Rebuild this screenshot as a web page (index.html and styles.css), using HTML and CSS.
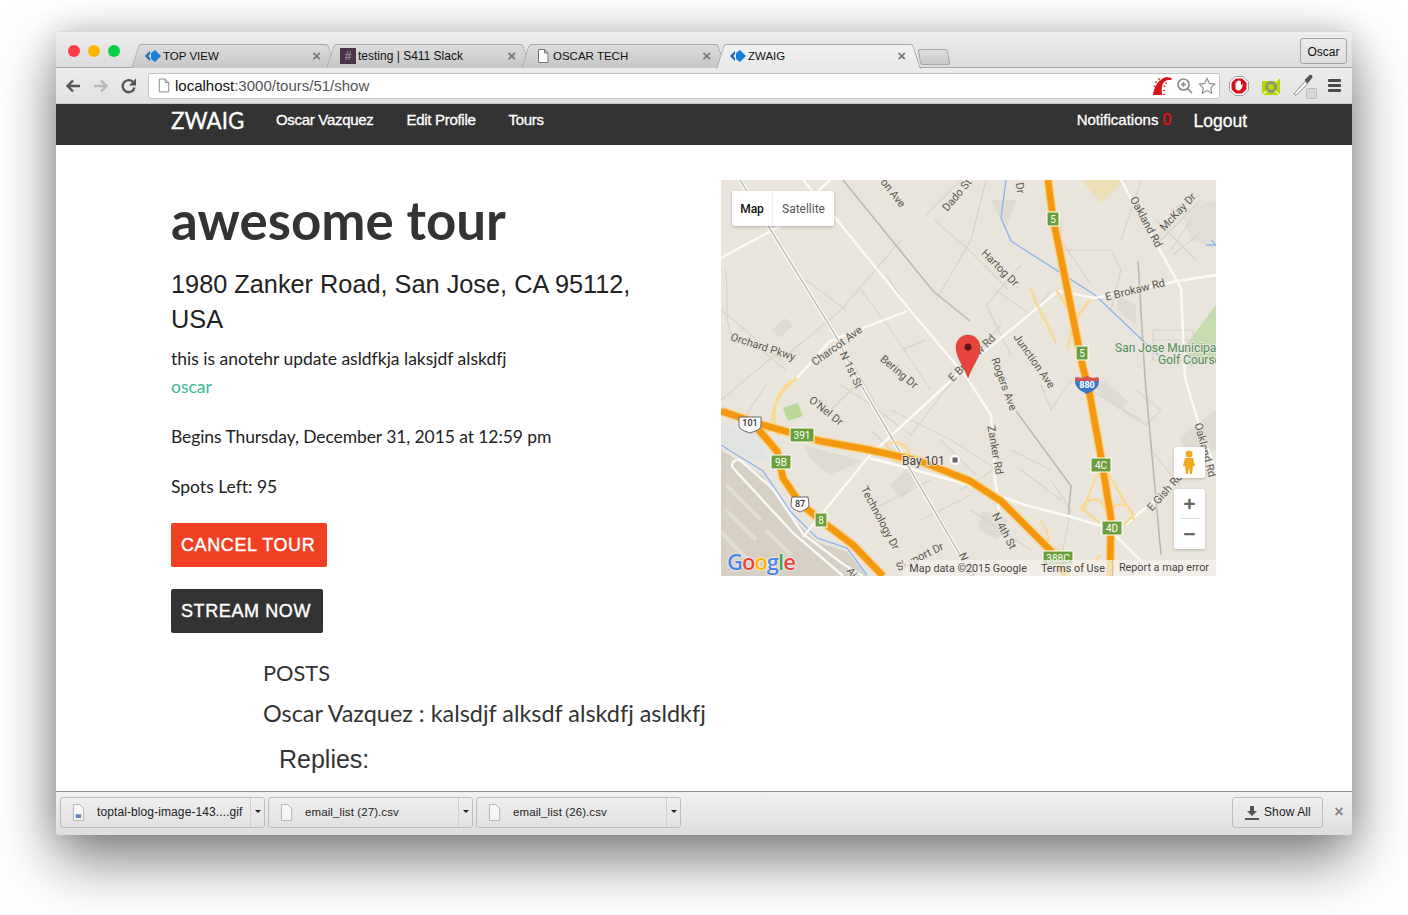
FILE: index.html
```html
<!DOCTYPE html>
<html lang="en">
<head>
    <title>ZWAIG</title>
    <meta charset="UTF-8">
    <link rel="stylesheet" href="styles.css">
</head>
<body>
<div class="window">
    <div class="titlebar">
        <div class="lights"><span class="light red"></span><span class="light yellow"></span><span class="light green"></span></div>
        <div class="tabs">
            <div class="tab">
                <svg class="favicon" viewBox="0 0 16 16"><path class="fav-dark" d="M0 8 5 3v3L3 8l2 2v3z"/><path class="fav-blue" d="M10 2l6 6-6 6-4-3V5z"/></svg>
                <span class="tab-title caps">TOP VIEW</span><span class="tab-close">×</span>
            </div>
            <div class="tab">
                <span class="slack-icon">#</span>
                <span class="tab-title">testing | S411 Slack</span><span class="tab-close">×</span>
            </div>
            <div class="tab">
                <svg class="favicon" viewBox="0 0 16 16"><path class="page-line" d="M3.5 1.5h6l3.500 3.500v9.500h-9.500zM9.500 1.500v3.500h3.500"/></svg>
                <span class="tab-title caps">OSCAR TECH</span><span class="tab-close">×</span>
            </div>
            <div class="tab active">
                <svg class="favicon" viewBox="0 0 16 16"><path class="fav-dark" d="M0 8 5 3v3L3 8l2 2v3z"/><path class="fav-blue" d="M10 2l6 6-6 6-4-3V5z"/></svg>
                <span class="tab-title caps">ZWAIG</span><span class="tab-close">×</span>
            </div>
            <div class="new-tab"></div>
        </div>
        <div class="user-btn">Oscar</div>
    </div>

    <div class="toolbar">
        <svg class="nav-icon" viewBox="0 0 18 18"><path class="arrow dark" d="M16 9H4M9 3.500 3.500 9 9 14.500"/></svg>
        <svg class="nav-icon" viewBox="0 0 18 18"><path class="arrow light" d="M2 9h12M9 3.500 14.500 9 9 14.500"/></svg>
        <svg class="nav-icon" viewBox="0 0 18 18"><path class="arrow dark" d="M14.500 10.500a6 6 0 1 1-1.500-5.500"/><path class="arrow-head" d="M16 1.500v7h-7z"/></svg>
        <div class="omnibox">
            <svg class="page-icon" viewBox="0 0 14 16"><path class="page-line" d="M1.500.500h7l4 4v11h-11zM8.500.500v4h4"/></svg>
            <span class="url"><b>localhost</b>:3000/tours/51/show</span>
            <svg class="omni-icon rails" viewBox="0 0 20 20"><path d="M0 20C1 11 6 3 14 1l6 1-1 2.500C14 3.500 10.500 6 9.500 11c-.6 3-.3 6 .5 9z"/><path d="M7 4 5.500 2.500M4 7 2 6M2.500 11 .5 10.500M13 7l1.500 1M11 10.500l2 .5M10.500 15l2 .5M11 19l2 .5" class="rails-spark"/></svg>
            <svg class="omni-icon" viewBox="0 0 18 18"><circle class="lens" cx="7.500" cy="7.500" r="5.500"/><path class="lens" d="M11.500 11.500 16 16M5 7.500h5M7.500 5v5"/></svg>
            <svg class="omni-icon star" viewBox="0 0 20 20"><path d="M10 1.500l2.600 5.600 6 .8-4.400 4.200 1.100 6L10 15.100l-5.300 3 1.100-6L1.400 7.900l6-.8z"/></svg>
        </div>
        <svg class="ext stop" viewBox="0 0 20 20"><path class="stop-outer" d="M6 .5h8L19.500 6v8L14 19.500H6L.5 14V6z"/><path class="stop-inner" d="M6.800 2.500h6.400l4.300 4.300v6.400l-4.300 4.300H6.800l-4.300-4.300V6.800z"/><path class="stop-hand" d="M6.500 11V6.500h1.300V9V5h1.400v4V4.500h1.400V9V5h1.400v4.500l1.200-1.300.9.700-1.900 4.100c-.5.900-1.100 1.500-2.300 1.500H9.500c-1.700 0-3-1-3-3z"/></svg>
        <svg class="ext lime-ext" viewBox="0 0 20 20"><path class="lime" d="M1 5h13l4-3 1 1v16H1z"/><circle class="lime-ring" cx="10" cy="11" r="4.500"/><path class="lime-slash" d="M14 6l5-5M1 19l5-4M14 15l5 4"/></svg>
        <svg class="dropper" viewBox="0 0 24 26"><path class="drop-stem" d="M1 21 12 8.500l2.500 2.500L3 22.500z"/><path class="drop-bulb" d="M11.500 7l5-5c1.500-1 4 1 2.500 3l-4.500 5.500z"/><rect class="drop-badge" x="13.500" y="15.500" width="10" height="10" rx="1"/></svg>
        <div class="menu-icon"><span></span><span></span><span></span></div>
    </div>

    <div class="viewport">
        <nav class="navbar">
            <a class="brand" href="#">ZWAIG</a>
            <a class="nav-link" href="#">Oscar Vazquez</a>
            <a class="nav-link" href="#">Edit Profile</a>
            <a class="nav-link" href="#">Tours</a>
            <a class="nav-link notif" href="#">Notifications <span class="count">0</span></a>
            <a class="logout" href="#">Logout</a>
        </nav>

        <div class="tour">
            <div class="tour-info">
                <h1>awesome tour</h1>
                <h3 class="address">1980 Zanker Road, San Jose, CA 95112, USA</h3>
                <p class="desc">this is anotehr update asldfkja laksjdf alskdfj</p>
                <a class="host" href="#">oscar</a>
                <p class="begins">Begins Thursday, December 31, 2015 at 12:59 pm</p>
                <p class="spots">Spots Left: 95</p>
                <a class="btn btn-cancel" href="#">CANCEL TOUR</a>
                <a class="btn btn-stream" href="#">STREAM NOW</a>
                <div class="posts">
                    <div class="posts-title">POSTS</div>
                    <div class="post">Oscar Vazquez : kalsdjf alksdf alskdfj asldkfj</div>
                    <div class="replies">Replies:</div>
                </div>
            </div>

            <div class="map">
                <svg class="map-canvas" viewBox="0 0 495 396">
                    <!-- land blocks -->
                    <path class="airport" d="M0 270 42 296 69 336 96 362 126 372 146 396H0z"/>
                    <path class="strip" d="M5 305 40 340M5 330 35 360M0 352 25 378M45 350l25 25"/>
                    <path class="runway" d="M0 243 38 252 48 282 30 280 0 262z"/>
                    <path class="sand" d="M360 0h45l-25 23z"/>
                    <path class="golf" d="M495 125 465 165 470 186 495 180z"/>
                    <path class="park" d="M62 228 77 223 82 236 67 241z"/>
                    <path class="block" d="M82 265 142 281 109 295 90 280zM270 20l25 0-10 30zM395 115l20 10 0 20-18-15zM383 200l25 22-10 8-25-22zM458 258l37-28v40l-25 10zM169 305 190 285 198 300 180 320zM262 330l25 10 -10 20-20-10zM50 150l14-12 8 8-14 12z"/>
                    <path class="block-light" d="M460 30l35-10v50l-25-10z"/>

                    <!-- minor streets -->
                    <path class="minor" d="M0 130 60 180 120 130 180 60M140 110l30 40 40 60M165 95l20 30M213 40l35 30 40 40M265 0l-15 60-35 60M300 85l-35 40 25 50M205 35l50-50M340 60l30 45M340 40v30l20 0 30 0 10 20-10 40M400 60l20-60M435 40l40 40M450 30l30-15M440 60l40-40M470 40l-20 30M452 75l25-20M432 150h40v30h-40zM432 160h40M432 170h40M40 170l25 20M0 220l60-50M25 235l20-30M120 205l30 20 40 30 30-40 60-70M150 250l40 40M170 230l60 30 55 35M220 260l35 35M300 290l40 30M240 310l40-25M290 270l40 20M370 210l50 30M400 230l25 15 15-15-25-20M430 270l40 50M200 340l50-25M330 300l20 30-10 50M250 330l60 40"/>
                    <path class="minor" d="M20 280l-15 60M110 230l30-30M130 180l25 45M180 170l25-10M330 110l-20 25-35-25M350 200l-20 30-10-25M4 90c6 30-4 50 10 70M85 100l40 30M150 330l60-30"/>

                    <!-- water -->
                    <path class="water" d="M285 0l-5 38 10 23 84 54 63 60M0 265 42 291 69 331 96 358 126 368 146 395M490 60l5 5M485 65l10 0"/>

                    <!-- rail -->
                    <path class="rail" d="M122 0 212 111 249 141M295 231 350 306 347 338M417 81 424 198 440 375"/>

                    <!-- streets -->
                    <path class="white" d="M0 78 59 46 109 0"/>
                    <path class="white" d="M82 0 112 35 189 130 246 198 270 235 274 298 278 330"/>
                    <path class="white" d="M76 198 109 161 186 131"/>
                    <path class="white" d="M82 357 149 275 247 185 337 111 374 118 457 101 495 95"/>
                    <path class="white" d="M400 0 460 108 464 198 480 251 495 290"/>
                    <path class="white" d="M149 278 249 305 304 325 347 336 387 348 434 395"/>
                    <path class="white" d="M404 345 460 298"/>
                    <path class="white" d="M12 288c-3-6 3-10 8-7l32 28 30 45 40 30 20 12"/>
                    <path class="white" d="M12 288 72 353 122 396"/>
                    <path class="light-rail" d="M19 0 116 158 136 198 239 375 250 396"/>
                    <path class="light-rail-core" d="M19 0 116 158 136 198 239 375 250 396"/>

                    <!-- ramps -->
                    <path class="ramp" d="M76 198C60 210 50 225 50 250M70 200C55 215 48 228 58 256M335 110c8 10 10 20 20 30 5-10 10-15 14-20M355 140c-5 10-7 20-8 30M310 108c5 20 15 30 25 55M380 285c-5 15-12 25-17 45l15 12M385 290c10 15 15 30 28 45l-10 10M360 330c5-15 25-15 25 5M388 335c5-15 22-15 25 5M165 265c10-8 30 3 20 15-8 5-18 0-20-15M340 371c-30-10 0 0-20-30M330 375c20 10 30 20 50 0"/>

                    <!-- freeways -->
                    <path class="hw-edge" d="M327 0 332 38 362 188 367 205 379 271 390 338 389 396"/>
                    <path class="hw-edge" d="M0 231 42 245 99 261 149 270 199 281 249 301 280 321 330 371 345 396"/>
                    <path class="hw-edge" d="M36 248 56 271 62 298 79 323 99 340 132 365 162 396"/>
                    <path class="hw" d="M327 0 332 38 362 188 367 205 379 271 390 338 389 396"/>
                    <path class="hw" d="M0 231 42 245 99 261 149 270 199 281 249 301 280 321 330 371 345 396"/>
                    <path class="hw" d="M36 248 56 271 62 298 79 323 99 340 132 365 162 396"/>

                    <!-- route markers -->
                    <g class="exit" transform="translate(332 39)"><rect x="-6" y="-7" width="12" height="14"/><text y="4">5</text></g>
                    <g class="exit" transform="translate(361 173)"><rect x="-6" y="-7" width="12" height="14"/><text y="4">5</text></g>
                    <g class="exit" transform="translate(380 285)"><rect x="-10" y="-7" width="20" height="14"/><text y="4">4C</text></g>
                    <g class="exit" transform="translate(391 348)"><rect x="-10" y="-7" width="20" height="14"/><text y="4">4D</text></g>
                    <g class="exit" transform="translate(337 378)"><rect x="-15" y="-7" width="30" height="14"/><text y="4">388C</text></g>
                    <g class="exit" transform="translate(81 255)"><rect x="-12" y="-7" width="24" height="14"/><text y="4">391</text></g>
                    <g class="exit" transform="translate(60 282)"><rect x="-10" y="-7" width="20" height="14"/><text y="4">9B</text></g>
                    <g class="exit" transform="translate(100 340)"><rect x="-6" y="-7" width="12" height="14"/><text y="4">8</text></g>
                    <g class="shield" transform="translate(29 243)"><path d="M-11-6h22v8c0 5-6 6-11 8-5-2-11-3-11-8z"/><text y="3">101</text></g>
                    <g class="shield" transform="translate(79 324)"><path d="M-8-7H8l1 7c0 5-5 6-9 8-4-2-9-3-9-8z"/><text y="3">87</text></g>
                    <g class="interstate" transform="translate(366 204)">
                        <path class="i-blue" d="M-12-3h24c0 7-6 10-12 13-6-3-12-6-12-13z"/>
                        <path class="i-red" d="M-12-3c0-2 0-3 1-4 4 1 8 1 11-1 3 2 7 2 11 1 1 1 1 2 1 4z"/>
                        <text y="4">880</text>
                    </g>

                    <!-- labels -->
                    <text class="lbl" transform="translate(236 15) rotate(-50)">Dado St</text>
                    <text class="lbl" transform="translate(172 13) rotate(52)">on Ave</text>
                    <text class="lbl" transform="translate(299 8) rotate(82)">Dr</text>
                    <text class="lbl" transform="translate(279 88) rotate(45)">Hartog Dr</text>
                    <text class="lbl" transform="translate(425 42) rotate(62)">Oakland Rd</text>
                    <text class="lbl" transform="translate(457 32) rotate(-47)">McKay Dr</text>
                    <text class="lbl" transform="translate(414 110) rotate(-14)">E Brokaw Rd</text>
                    <text class="lbl" transform="translate(42 167) rotate(18)">Orchard Pkwy</text>
                    <text class="lbl" transform="translate(116 166) rotate(-36)">Charcot Ave</text>
                    <text class="lbl" transform="translate(130 190) rotate(65)">N 1st St</text>
                    <text class="lbl" transform="translate(178 192) rotate(40)">Bering Dr</text>
                    <text class="lbl" transform="translate(251 178) rotate(-45)">E Brokaw Rd</text>
                    <text class="lbl" transform="translate(283 204) rotate(70)">Rogers Ave</text>
                    <text class="lbl" transform="translate(313 181) rotate(55)">Junction Ave</text>
                    <text class="lbl" transform="translate(105 231) rotate(38)">O'Nel Dr</text>
                    <text class="lbl" transform="translate(274 270) rotate(80)">Zanker Rd</text>
                    <text class="lbl" transform="translate(159 338) rotate(62)">Technology Dr</text>
                    <text class="lbl" transform="translate(283 351) rotate(62)">N 4th St</text>
                    <text class="lbl" transform="translate(444 312) rotate(-48)">E Gish Rd</text>
                    <text class="lbl" transform="translate(484 270) rotate(75)">Oakland Rd</text>
                    <text class="lbl" transform="translate(199 377) rotate(-26)">Skyport Dr</text>
                    <text class="lbl" transform="translate(249 391) rotate(65)">N 1st St</text>
                    <text class="lbl" transform="translate(138 402) rotate(52)">Airport</text>
                    <text class="lbl golf-lbl" x="394" y="172">San Jose Municipal</text>
                    <text class="lbl golf-lbl" x="437" y="184">Golf Course</text>
                    <text class="lbl poi" x="181" y="285">Bay 101</text>
                    <g transform="translate(234 280)"><circle class="poi-bg" r="5"/><path class="poi-mark" d="M-2.500-2.500h5v5h-5z"/></g>

                    <!-- marker -->
                    <path class="pin" d="M247 198C243 186 235 178 235 167a12 12 0 0 1 24 0C259 178 251 186 247 198z"/>
                    <circle class="pin-dot" cx="247" cy="167" r="3.500"/>
                </svg>

                <div class="map-type"><span class="type-on">Map</span><span class="type-off">Satellite</span></div>
                <div class="pegman">
                    <svg viewBox="0 0 14 24"><circle class="peg" cx="7" cy="4" r="3.500"/><path class="peg" d="M3 8h8l2 8h-2l-1 8H8l-1-7-1 7H4l-1-8H1z"/></svg>
                </div>
                <div class="zoom-ctl">
                    <span class="zoom-btn">+</span>
                    <span class="zoom-sep"></span>
                    <span class="zoom-btn">−</span>
                </div>
                <div class="google"><i class="g-b">G</i><i class="g-r">o</i><i class="g-y">o</i><i class="g-b">g</i><i class="g-g">l</i><i class="g-r">e</i></div>
                <div class="map-foot">
                    <span class="foot-item foot-data">Map data ©2015 Google</span>
                    <span class="foot-item foot-terms">Terms of Use</span>
                    <span class="foot-item foot-report">Report a map error</span>
                </div>
            </div>
        </div>
    </div>

    <div class="downloads">
        <div class="dl-item">
            <svg class="dl-icon" viewBox="0 0 14 18"><path class="dl-page" d="M1.500.500h7l4 4v13h-11z"/><path class="dl-pic" d="M4 11h6v4H4z"/></svg>
            <span class="dl-name long">toptal-blog-image-143....gif</span>
            <span class="dl-caret"></span>
        </div>
        <div class="dl-item">
            <svg class="dl-icon" viewBox="0 0 14 18"><path class="dl-page" d="M1.500.500h7l4 4v13h-11z"/></svg>
            <span class="dl-name">email_list (27).csv</span>
            <span class="dl-caret"></span>
        </div>
        <div class="dl-item">
            <svg class="dl-icon" viewBox="0 0 14 18"><path class="dl-page" d="M1.500.500h7l4 4v13h-11z"/></svg>
            <span class="dl-name">email_list (26).csv</span>
            <span class="dl-caret"></span>
        </div>
        <div class="show-all">
            <svg class="dl-arrow" viewBox="0 0 14 14"><path d="M5 0h4v5h3L7 10 2 5h3zM0 12h14v2H0z"/></svg>
            <span class="show-text">Show All</span>
        </div>
        <span class="dl-close">×</span>
    </div>
</div>
</body>
</html>
```

FILE: styles.css
```css
* {
    box-sizing: border-box;
}
html, body {
    margin: 0;
    height: 100%;
    overflow: hidden;
    background-color: #fff;
}
body {
    padding: 31px 56px 0;
    font-family: "Liberation Sans", Arial, sans-serif;
    color: #333;
}
a {
    text-decoration: none;
}
.window {
    width: 1296px;
    height: 804px;
    display: flex;
    flex-direction: column;
    border-radius: 5px 5px 4px 4px;
    background-color: #fff;
    box-shadow: 0 25px 60px rgba(0, 0, 0, 0.5), 0 0 30px rgba(0, 0, 0, 0.15);
    overflow: hidden;
}

/* title bar */
.titlebar {
    height: 37px;
    display: flex;
    background: linear-gradient(#eeeeee, #dcdcdc);
    border-top: 1px solid #d8d8d8;
    border-bottom: 1px solid #a8a8a8;
    position: relative;
}
.lights {
    display: flex;
    gap: 8px;
    padding: 13px 0 0 12px;
    width: 75px;
}
.light {
    width: 12px;
    height: 12px;
    border-radius: 50%;
}
.light.red { background-color: #fc3b44; }
.light.yellow { background-color: #fdb802; }
.light.green { background-color: #09ce48; }
.tabs {
    display: flex;
    padding-top: 12px;
    height: 36px;
}
.tab {
    position: relative;
    width: 205px;
    height: 24px;
    margin-right: -10px;
    padding: 0 14px;
    display: flex;
    align-items: center;
    gap: 2px;
    font-size: 12px;
    color: #111;
}
.tab::before, .tab::after {
    content: "";
    position: absolute;
    top: 0;
    bottom: 0;
    width: 60%;
    z-index: 0;
    border-top: 1px solid #a6a6a6;
    background: linear-gradient(#dcdcdc, #c6c6c6);
}
.tab::before {
    left: 4px;
    transform: skewX(-18deg);
    border-left: 1px solid #a6a6a6;
    border-radius: 3px 0 0 0;
}
.tab::after {
    right: 4px;
    transform: skewX(18deg);
    border-right: 1px solid #a6a6a6;
    border-radius: 0 3px 0 0;
}
.tab.active {
    z-index: 2;
    height: 25px;
    padding-bottom: 1px;
}
.tab.active::before, .tab.active::after {
    background: linear-gradient(#f2f2f2, #e8e8e8);
}
.tab > * {
    position: relative;
    z-index: 1;
}
.favicon {
    width: 16px;
    height: 16px;
    flex: none;
}
.fav-blue { fill: #1a7fd6; }
.fav-dark { fill: #1262ae; }
.page-line {
    fill: #fff;
    stroke: #777;
    stroke-width: 1;
}
.slack-icon {
    width: 16px;
    height: 16px;
    flex: none;
    background-color: #4d3347;
    color: #b9a8b4;
    font-size: 12px;
    line-height: 16px;
    text-align: center;
}
.tab-title {
    flex: 1;
}
.tab-title.caps {
    font-size: 11.500px;
}
.tab-close {
    color: #777;
    font-size: 15px;
    font-weight: bold;
    line-height: 16px;
    margin-right: 1px;
}
.new-tab {
    width: 30px;
    height: 16px;
    margin: 5px 0 0 8px;
    border: 1px solid #a6a6a6;
    border-radius: 3px;
    background: linear-gradient(#dedede, #cacaca);
    transform: skewX(10deg);
}
.user-btn {
    position: absolute;
    top: 6px;
    right: 5px;
    width: 47px;
    height: 26px;
    border: 1px solid #a5a5a5;
    border-radius: 3px;
    font-size: 12px;
    line-height: 27px;
    text-align: center;
    color: #111;
}

/* toolbar */
.toolbar {
    height: 36px;
    display: flex;
    align-items: center;
    padding: 0 9px 0 8px;
    background: linear-gradient(#ececec, #e2e2e2);
    border-bottom: 1px solid #c8c8c8;
    gap: 10px;
}
.nav-icon {
    width: 18px;
    height: 18px;
    flex: none;
}
.arrow {
    fill: none;
    stroke-width: 2.400;
}
.arrow.dark { stroke: #555; }
.arrow.light { stroke: #b8b8b8; }
.arrow-head { fill: #555; }
.omnibox {
    width: 1072px;
    height: 26px;
    display: flex;
    align-items: center;
    background-color: #fff;
    border: 1px solid #c4c4c4;
    border-radius: 3px;
    padding: 0 3px 0 9px;
    flex: none;
}
.page-icon {
    width: 12px;
    height: 15px;
    flex: none;
}
.url {
    flex: 1;
    margin-left: 5px;
    font-size: 15px;
    color: #555;
}
.url b {
    font-weight: normal;
    color: #111;
}
.omni-icon {
    width: 18px;
    height: 18px;
    margin-left: 4px;
    flex: none;
}
.rails {
    width: 19px;
    height: 19px;
    fill: #d5151c;
}
.rails-spark {
    stroke: #d5151c;
    stroke-width: 1.300;
    fill: none;
}
.lens {
    fill: none;
    stroke: #888;
    stroke-width: 1.600;
}
.star path {
    fill: #fff;
    stroke: #888;
    stroke-width: 1.200;
}
.ext {
    width: 20px;
    height: 20px;
    flex: none;
}
.stop {
    margin-left: -1px;
}
.lime-ext {
    margin-left: 2px;
}
.stop-outer { fill: #fff; stroke: #888; stroke-width: 0.800; }
.stop-inner { fill: #d9101a; }
.stop-hand { fill: #fff; }
.lime { fill: #b9d800; }
.lime-ring { fill: none; stroke: #8a9a70; stroke-width: 3; }
.lime-slash { fill: none; stroke: #eef3d0; stroke-width: 1.500; }
.dropper {
    width: 24px;
    height: 26px;
    flex: none;
    margin-left: 2px;
}
.drop-stem { fill: #fff; stroke: #888; }
.drop-bulb { fill: #555; }
.drop-badge { fill: #d8d6d0; stroke: #bbb; }
.menu-icon {
    width: 13px;
    margin-left: 1px;
    display: flex;
    flex-direction: column;
    gap: 2px;
}
.menu-icon span {
    height: 3px;
    border-radius: 1px;
    background-color: #4a4a4a;
}

/* page */
.viewport {
    flex: 1;
    min-height: 0;
    overflow: hidden;
    background-color: #fff;
    border-bottom: 1px solid #8e8e8e;
}
.navbar {
    height: 41px;
    padding-left: 115px;
    display: flex;
    align-items: center;
    background-color: #333;
    color: #fff;
}
.brand {
    font-family: Lato, sans-serif;
    font-size: 22.300px;
    color: #fff;
    -webkit-text-stroke: 0.300px #fff;
    width: 105px;
    margin-top: -9px;
}
.nav-link {
    font-size: 15px;
    color: #fff;
    -webkit-text-stroke: 0.300px #fff;
    margin-right: 33px;
    margin-top: -10px;
    letter-spacing: -0.300px;
}
.notif {
    margin-left: auto;
    margin-right: 22px;
    letter-spacing: 0;
}
.count {
    font-size: 16px;
    color: #f01010;
    -webkit-text-stroke: 0.300px #f01010;
}
.logout {
    font-size: 17.500px;
    color: #fff;
    -webkit-text-stroke: 0.300px #fff;
    margin-right: 105px;
    margin-top: -6px;
}
.tour {
    display: flex;
    padding: 35px 0 0 115px;
}
.tour-info {
    width: 550px;
    flex: none;
    font-family: Lato, sans-serif;
    font-size: 17.500px;
    font-variant-ligatures: none;
    color: #222;
}
h1 {
    margin: 9px 0 0;
    font-size: 52.800px;
    line-height: 62px;
    font-weight: 700;
    color: #333;
}
.address {
    margin: 16px 0 0;
    width: 470px;
    font-family: "Liberation Sans", Arial, sans-serif;
    font-size: 25.300px;
    line-height: 35px;
    font-weight: normal;
    color: #222;
}
.desc {
    margin: 8px 0 0;
    line-height: 28px;
}
.host {
    display: block;
    color: #3bb897;
    line-height: 28px;
}
.begins {
    margin: 22px 0 0;
    line-height: 28px;
    letter-spacing: -0.090px;
}
.spots {
    margin: 22px 0 0;
    line-height: 28px;
}
.btn {
    display: table;
    height: 44px;
    padding: 0 12px 0 10px;
    border-radius: 2px;
    font-family: "Liberation Sans", Arial, sans-serif;
    font-size: 18px;
    line-height: 44px;
    letter-spacing: 0.600px;
    color: #fff;
    -webkit-text-stroke: 0.400px #fff;
}
.btn-cancel {
    margin-top: 22px;
    background-color: #f24024;
}
.btn-stream {
    margin-top: 22px;
    background-color: #333;
}
.posts {
    margin: 24px 0 0 92px;
    color: #333;
}
.posts-title {
    font-size: 21.800px;
    line-height: 32px;
}
.post {
    margin-top: 8px;
    font-size: 23.400px;
    line-height: 32px;
    white-space: nowrap;
}
.replies {
    margin: 14px 0 0 16px;
    font-family: "Liberation Sans", Arial, sans-serif;
    font-size: 25px;
    line-height: 32px;
}

/* map */
.map {
    width: 495px;
    height: 396px;
    flex: none;
    position: relative;
    overflow: hidden;
    background-color: #e9e5dc;
}
.map-canvas {
    display: block;
    width: 495px;
    height: 396px;
}
.map-canvas path {
    fill: none;
}
.map-canvas .airport { fill: #d6cfc3; }
.map-canvas .runway { fill: #e1e3e2; }
.map-canvas .sand { fill: #ede0b6; }
.map-canvas .golf { fill: #c5dbb0; }
.map-canvas .park { fill: #b8d99a; }
.map-canvas .block { fill: #dfdbd2; }
.map-canvas .block-light { fill: #e2ded5; }
.strip { stroke: #e2ddd3; stroke-width: 4; }
.minor { stroke: #d8d4c7; stroke-width: 1.200; }
.water { stroke: #8db5ee; stroke-width: 1.400; }
.rail { stroke: #b9b9b3; stroke-width: 1.600; }
.white { stroke: #fbfaf7; stroke-width: 2.400; }
.light-rail { stroke: #fbfaf7; stroke-width: 4; }
.light-rail-core { stroke: #b9b9b3; stroke-width: 1.400; }
.ramp { stroke: #fbd88c; stroke-width: 2.200; }
.hw-edge { stroke: #fbcf7d; stroke-width: 9; }
.hw { stroke: #f4990f; stroke-width: 6.500; }
.exit rect {
    fill: #6b9f3b;
    stroke: #fff;
    stroke-width: 1;
}
.exit text {
    font-family: Roboto, sans-serif;
    font-size: 10px;
    fill: #fff;
    text-anchor: middle;
}
.map-canvas .shield path {
    fill: #fff;
    stroke: #666;
    stroke-width: 1;
}
.shield text {
    font-family: Roboto, sans-serif;
    font-size: 9px;
    font-weight: 500;
    fill: #333;
    text-anchor: middle;
}
.map-canvas .i-blue { fill: #3a77c4; }
.map-canvas .i-red { fill: #d9534f; }
.interstate text {
    font-family: Roboto, sans-serif;
    font-size: 9px;
    font-weight: 700;
    fill: #fff;
    text-anchor: middle;
}
.lbl {
    font-family: Roboto, sans-serif;
    font-size: 11px;
    fill: #5b5a50;
    stroke: #e9e5dc;
    stroke-width: 2px;
    paint-order: stroke;
    text-anchor: middle;
    dominant-baseline: central;
}
.golf-lbl {
    font-size: 12px;
    fill: #4d8f58;
    text-anchor: start;
    dominant-baseline: auto;
}
.poi {
    font-size: 12px;
    fill: #444;
    text-anchor: start;
    dominant-baseline: auto;
}
.poi-bg { fill: #fff; }
.map-canvas .poi-mark { fill: #6d5d5d; }
.map-canvas .pin {
    fill: #e8433d;
    stroke: #c33a33;
    stroke-width: 0.500;
}
.pin-dot { fill: #5f1210; }
.map-type {
    position: absolute;
    top: 11px;
    left: 11px;
    width: 102px;
    height: 35px;
    display: flex;
    background-color: #fff;
    border-radius: 2px;
    box-shadow: 0 1px 3px rgba(0, 0, 0, 0.25);
    font-family: Roboto, sans-serif;
    font-size: 12px;
    line-height: 36px;
    text-align: center;
}
.type-on {
    width: 41px;
    font-weight: 500;
    color: #111;
    border-right: 1px solid #eee;
}
.type-off {
    flex: 1;
    color: #565656;
}
.pegman {
    position: absolute;
    top: 267px;
    left: 453px;
    width: 31px;
    height: 31px;
    padding: 3px 8px;
    background-color: #fff;
    border-radius: 2px;
    box-shadow: 0 1px 3px rgba(0, 0, 0, 0.2);
}
.pegman svg {
    display: block;
    width: 14px;
    height: 24px;
}
.peg {
    fill: #f2a81d;
}
.zoom-ctl {
    position: absolute;
    top: 309px;
    left: 453px;
    width: 31px;
    height: 60px;
    display: flex;
    flex-direction: column;
    align-items: center;
    background-color: #fff;
    border-radius: 2px;
    box-shadow: 0 1px 3px rgba(0, 0, 0, 0.2);
}
.zoom-btn {
    height: 29px;
    font-family: "Liberation Sans", Arial, sans-serif;
    font-size: 21px;
    font-weight: bold;
    line-height: 30px;
    color: #666;
}
.zoom-sep {
    width: 20px;
    height: 1px;
    background-color: #e0e0e0;
}
.google {
    position: absolute;
    left: 6px;
    bottom: 3px;
    font-family: "Open Sans", sans-serif;
    font-size: 22px;
    font-weight: 600;
    line-height: 24px;
    letter-spacing: -1px;
    text-shadow: 0 0 2px #fff, 0 0 2px #fff;
}
.google i {
    font-style: normal;
}
.g-b { color: #4a86e8; }
.g-r { color: #e8443a; }
.g-y { color: #f5b800; }
.g-g { color: #3fa653; }
.map-foot {
    position: absolute;
    right: 0;
    bottom: 0;
    height: 16px;
    display: flex;
    font-family: Roboto, sans-serif;
    font-size: 10.800px;
    line-height: 17px;
    color: #444;
}
.foot-item {
    background-color: rgba(245, 242, 236, 0.75);
    padding: 0 7px 0 6px;
}
.foot-data { padding-right: 8px; }
.foot-report { border-left: 1px solid #e8c070; line-height: 15px; }

/* download shelf */
.downloads {
    height: 43px;
    flex: none;
    display: flex;
    padding: 5px 0 0 4px;
    gap: 3px;
    background: linear-gradient(#f1f1f1, #dedede);
    font-size: 11.500px;
    letter-spacing: 0.100px;
    color: #222;
}
.dl-item {
    width: 205px;
    height: 31px;
    display: flex;
    align-items: center;
    border: 1px solid #bdbdbd;
    border-radius: 3px;
    padding-left: 11px;
}
.dl-icon {
    width: 13px;
    height: 17px;
    flex: none;
    margin-right: 12px;
}
.dl-page {
    fill: #f6f6f6;
    stroke: #b0b0b0;
}
.dl-pic {
    fill: #6c86b8;
}
.dl-name {
    flex: 1;
    white-space: nowrap;
    margin-top: -2px;
}
.dl-name.long {
    font-size: 12px;
}
.dl-caret {
    width: 14px;
    height: 29px;
    flex: none;
    position: relative;
    border-left: 1px solid #cfcfcf;
}
.dl-caret::after {
    content: "";
    position: absolute;
    top: 12px;
    left: 4px;
    border: 3px solid transparent;
    border-top: 3px solid #222;
}
.show-all {
    width: 91px;
    height: 31px;
    margin-left: auto;
    display: flex;
    align-items: center;
    padding-left: 12px;
    gap: 5px;
    border: 1px solid #bdbdbd;
    border-radius: 3px;
    font-size: 12px;
}
.show-text {
    margin-top: -2px;
}
.dl-arrow {
    width: 14px;
    height: 14px;
    fill: #555;
}
.dl-close {
    width: 26px;
    height: 31px;
    line-height: 29px;
    text-align: center;
    font-size: 16px;
    font-weight: bold;
    color: #888;
}
```
